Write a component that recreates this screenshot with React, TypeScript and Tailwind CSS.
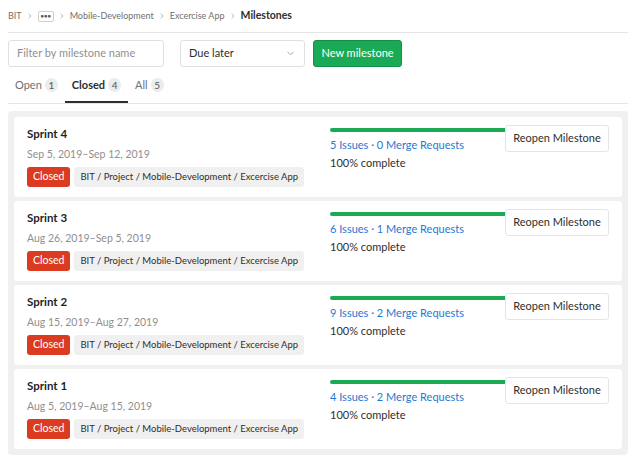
import { ChevronRight, ChevronDown } from 'lucide-react'

const milestones = [
  { name: 'Sprint 4', dates: 'Sep 5, 2019–Sep 12, 2019', issues: 5, mrs: 0 },
  { name: 'Sprint 3', dates: 'Aug 26, 2019–Sep 5, 2019', issues: 6, mrs: 1 },
  { name: 'Sprint 2', dates: 'Aug 15, 2019–Aug 27, 2019', issues: 9, mrs: 2 },
  { name: 'Sprint 1', dates: 'Aug 5, 2019–Aug 15, 2019', issues: 4, mrs: 2 },
]

function Sep() {
  return <ChevronRight size={8} strokeWidth={2} className="mx-[4px] text-[#909090]" />
}

function Tab({ label, count, active }: { label: string; count: number; active?: boolean }) {
  return (
    <div
      className={
        'flex h-full items-center gap-[3px] px-[7px] ' +
        (active ? 'border-b-2 border-[#2e2e2e] pt-[2px] font-bold text-[#2e2e2e]' : 'text-[#707070]')
      }
    >
      <span>{label}</span>
      <span className="flex h-[14px] min-w-[13px] items-center justify-center rounded-full bg-[#ececec] px-[3px] text-[10px] font-normal text-[#555]">
        {count}
      </span>
    </div>
  )
}

export default function App() {
  return (
    <div className="h-[466px] w-[640px] overflow-hidden bg-white pl-2 pr-3 font-['Lato','Segoe_UI',sans-serif] text-[11px] text-[#2e2e2e]">
      {/* breadcrumb */}
      <div className="flex h-[33px] items-center border-b border-[#e5e5e5] text-[9px] text-[#707070]">
        <span>BIT</span>
        <Sep />
        <span className="flex h-[11px] w-[16px] items-center justify-center rounded-[2px] border border-[#cfcfcf] text-[6px] font-bold leading-none text-[#555]">
          •••
        </span>
        <Sep />
        <span>Mobile-Development</span>
        <Sep />
        <span>Excercise App</span>
        <Sep />
        <span className="text-[10.5px] font-bold text-[#2e2e2e]">Milestones</span>
      </div>

      {/* filters */}
      <div className="mt-[7px] flex items-center">
        <div className="flex h-[27px] w-[156px] items-center rounded-[3px] border border-[#e0e0e0] px-[8px] text-[#8f8f8f]">
          Filter by milestone name
        </div>
        <div className="ml-4 flex h-[27px] w-[125px] items-center justify-between rounded-[3px] border border-[#e0e0e0] px-[8px]">
          <span>Due later</span>
          <ChevronDown size={11} className="text-[#a0a0a0]" />
        </div>
        <div className="ml-2 flex h-[27px] w-[89px] items-center justify-center rounded-[3px] border border-[#168f48] bg-[#1aaa55] text-white">
          New milestone
        </div>
      </div>

      {/* tabs */}
      <div className="flex h-[37px] items-stretch border-b border-[#e5e5e5]">
        <Tab label="Open" count={1} />
        <Tab label="Closed" count={4} active />
        <Tab label="All" count={5} />
      </div>

      {/* list */}
      <div className="mt-[7px] flex flex-col gap-[4px] rounded-[4px] bg-[#f0f0f0] p-[6px]">
        {milestones.map((m) => (
          <div key={m.name} className="grid h-[80px] grid-cols-2 gap-x-[24px] rounded-[3px] bg-white px-[13px]">
            <div className="pt-[8px]">
              <div className="text-[11.5px] leading-[18px] font-bold text-[#1f1f1f]">{m.name}</div>
              <div className="mt-[1px] text-[10.5px] leading-[20px] text-[#8f8f8f]">{m.dates}</div>
              <div className="mt-[3px] flex gap-[4px] whitespace-nowrap text-[9.5px]">
                <span className="flex h-[20px] items-center rounded-[3px] bg-[#db3b21] px-[6px] text-[10.5px] text-white">Closed</span>
                <span className="flex h-[20px] items-center rounded-[3px] bg-[#f0f0f0] px-[6px] text-[#2e2e2e]">
                  BIT / Project / Mobile-Development / Excercise App
                </span>
              </div>
            </div>
            <div className="flex">
              <div className="flex-1 pt-[11px]">
                <div className="h-[4px] rounded-l-full bg-[#1aaa55]" />
                <div className="mt-[4px] leading-[18px] text-[#1f78d1]">
                  {m.issues} Issues · {m.mrs} Merge Requests
                </div>
                <div className="leading-[17px]">100% complete</div>
              </div>
              <div className="mt-[8px] flex h-[27px] w-[104px] items-center justify-center rounded-[3px] border border-[#e5e5e5] bg-white">
                Reopen Milestone
              </div>
            </div>
          </div>
        ))}
      </div>
    </div>
  )
}
